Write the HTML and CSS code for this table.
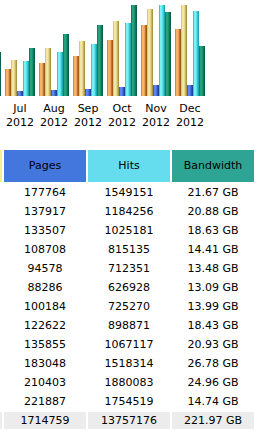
FILE: index.html
```html
<!DOCTYPE html>
<html>
<head>
<meta charset="utf-8">
<link rel="stylesheet" href="styles.css">
</head>
<body>
<div class="chart">
  <div class="month first">
    <div class="bars">
      <div class="bar u" style="height:0px"></div>
      <div class="bar v" style="height:0px"></div>
      <div class="bar p" style="height:0px"></div>
      <div class="bar h" style="height:0px"></div>
      <div class="bar k" style="height:44px"></div>
    </div>
    <div class="label"></div>
  </div>
  <div class="month">
    <div class="bars">
      <div class="bar u" style="height:27px"></div>
      <div class="bar v" style="height:36px"></div>
      <div class="bar p" style="height:5px"></div>
      <div class="bar h" style="height:35px"></div>
      <div class="bar k" style="height:48px"></div>
    </div>
    <div class="label">Jul<br>2012</div>
  </div>
  <div class="month">
    <div class="bars">
      <div class="bar u" style="height:33px"></div>
      <div class="bar v" style="height:48px"></div>
      <div class="bar p" style="height:6px"></div>
      <div class="bar h" style="height:44px"></div>
      <div class="bar k" style="height:62px"></div>
    </div>
    <div class="label">Aug<br>2012</div>
  </div>
  <div class="month">
    <div class="bars">
      <div class="bar u" style="height:40px"></div>
      <div class="bar v" style="height:55px"></div>
      <div class="bar p" style="height:7px"></div>
      <div class="bar h" style="height:52px"></div>
      <div class="bar k" style="height:71px"></div>
    </div>
    <div class="label">Sep<br>2012</div>
  </div>
  <div class="month">
    <div class="bars">
      <div class="bar u" style="height:56px"></div>
      <div class="bar v" style="height:75px"></div>
      <div class="bar p" style="height:9px"></div>
      <div class="bar h" style="height:73px"></div>
      <div class="bar k" style="height:91px"></div>
    </div>
    <div class="label">Oct<br>2012</div>
  </div>
  <div class="month">
    <div class="bars">
      <div class="bar u" style="height:71px"></div>
      <div class="bar v" style="height:87px"></div>
      <div class="bar p" style="height:11px"></div>
      <div class="bar h" style="height:91px"></div>
      <div class="bar k" style="height:84px"></div>
    </div>
    <div class="label">Nov<br>2012</div>
  </div>
  <div class="month">
    <div class="bars">
      <div class="bar u" style="height:67px"></div>
      <div class="bar v" style="height:91px"></div>
      <div class="bar p" style="height:11px"></div>
      <div class="bar h" style="height:85px"></div>
      <div class="bar k" style="height:50px"></div>
    </div>
    <div class="label">Dec<br>2012</div>
  </div>
</div>

<div class="table">
  <div class="th visits">&nbsp;</div>
  <div class="th pages">Pages</div>
  <div class="th hits">Hits</div>
  <div class="th bw">Bandwidth</div>

  <div class="td">&nbsp;</div><div class="td">177764</div><div class="td">1549151</div><div class="td">21.67 GB</div>
  <div class="td">&nbsp;</div><div class="td">137917</div><div class="td">1184256</div><div class="td">20.88 GB</div>
  <div class="td">&nbsp;</div><div class="td">133507</div><div class="td">1025181</div><div class="td">18.63 GB</div>
  <div class="td">&nbsp;</div><div class="td">108708</div><div class="td">815135</div><div class="td">14.41 GB</div>
  <div class="td">&nbsp;</div><div class="td">94578</div><div class="td">712351</div><div class="td">13.48 GB</div>
  <div class="td">&nbsp;</div><div class="td">88286</div><div class="td">626928</div><div class="td">13.09 GB</div>
  <div class="td">&nbsp;</div><div class="td">100184</div><div class="td">725270</div><div class="td">13.99 GB</div>
  <div class="td">&nbsp;</div><div class="td">122622</div><div class="td">898871</div><div class="td">18.43 GB</div>
  <div class="td">&nbsp;</div><div class="td">135855</div><div class="td">1067117</div><div class="td">20.93 GB</div>
  <div class="td">&nbsp;</div><div class="td">183048</div><div class="td">1518314</div><div class="td">26.78 GB</div>
  <div class="td">&nbsp;</div><div class="td">210403</div><div class="td">1880083</div><div class="td">24.96 GB</div>
  <div class="td">&nbsp;</div><div class="td">221887</div><div class="td">1754519</div><div class="td">14.74 GB</div>

  <div class="td total">&nbsp;</div><div class="td total">1714759</div><div class="td total">13757176</div><div class="td total">221.97 GB</div>
</div>
</body>
</html>
```

FILE: styles.css
```css
html, body {
  margin: 0;
  padding: 0;
  background: #ffffff;
}

body {
  font-family: "DejaVu Sans", Verdana, sans-serif;
  font-size: 11px;
  color: #000000;
  width: 267px;
  overflow: hidden;
}

.chart {
  display: flex;
  gap: 4px;
  margin-left: -29px;
}

.month {
  width: 30px;
  display: flex;
  flex-direction: column;
}

.bars {
  height: 96px;
  display: flex;
  align-items: flex-end;
}

.bar {
  width: 6px;
}

.bar.u {
  background: linear-gradient(to right, #d88a3a 0, #d88a3a 16%, #f4b46c 16%, #f4b46c 50%, #e9a255 50%, #e9a255 66%, #c07226 66%, #c07226 83%, #a35a1a 83%);
}

.bar.v {
  background: linear-gradient(to right, #d8c878 0, #d8c878 16%, #f2e6a6 16%, #f2e6a6 50%, #e6d68c 50%, #e6d68c 66%, #c9b664 66%, #c9b664 83%, #a89648 83%);
}

.bar.p {
  background: linear-gradient(to right, #3a5fcc 0, #3a5fcc 16%, #5a86ee 16%, #5a86ee 50%, #4673e0 50%, #4673e0 66%, #2f52bb 66%, #2f52bb 83%, #2442a2 83%);
}

.bar.h {
  background: linear-gradient(to right, #36c8d2 0, #36c8d2 16%, #7eeef4 16%, #7eeef4 50%, #5ae2ec 50%, #5ae2ec 66%, #36c6d0 66%, #36c6d0 83%, #1fa7b0 83%);
}

.bar.k {
  background: linear-gradient(to right, #137d60 0, #137d60 16%, #26a07f 16%, #26a07f 50%, #1a9070 50%, #1a9070 66%, #10745a 66%, #10745a 83%, #0a604a 83%);
}

.label {
  padding-top: 6px;
  line-height: 14px;
  text-align: center;
  white-space: nowrap;
  display: flex;
  flex-direction: column;
  align-items: center;
}

.table {
  display: grid;
  grid-template-columns: repeat(4, 82px);
  column-gap: 2px;
  row-gap: 2px;
  margin-top: 20px;
  margin-left: -80px;
}

.th {
  height: 32px;
  line-height: 32px;
  text-align: center;
  color: #000000;
}

.th.visits { background: #f4f090; }
.th.pages { background: #4477dd; }
.th.hits { background: #66ddee; }
.th.bw { background: #2ea495; }

.td {
  height: 17px;
  line-height: 17px;
  text-align: center;
}

.td.total {
  background: #ececec;
}
```
